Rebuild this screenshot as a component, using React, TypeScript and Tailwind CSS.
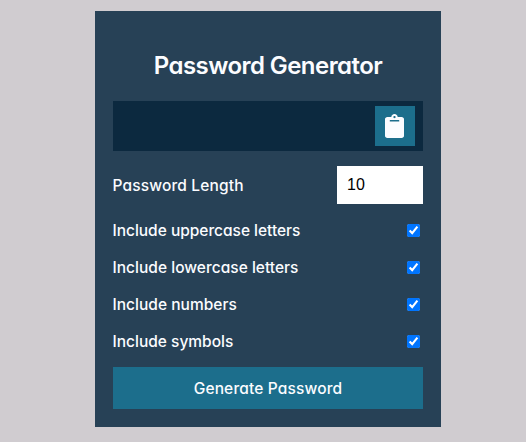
import { FaClipboard } from 'react-icons/fa';

type Option = { id: string; label: string; style: string };

const options: Option[] = [
  { id: 'uppercase', label: 'Include uppercase letters', style: 'tracking-[-0.02px]' },
  { id: 'lowercase', label: 'Include lowercase letters', style: 'tracking-[0.02px]' },
  { id: 'numbers', label: 'Include numbers', style: 'tracking-[0.02px]' },
  { id: 'symbols', label: 'Include symbols', style: 'tracking-[0px]' },
];

export default function App() {
  return (
    <main className="flex h-[442px] w-full justify-center bg-[#d0ccd0] pt-[11px] pl-[10px] font-['Inter',sans-serif] text-[15.5px] leading-6 font-[450] text-[#fbfcff] [font-feature-settings:'cv11']">
      <section className="flex h-[416px] w-[346px] flex-col bg-[#274156] px-[18px] pt-10">
        <h2 className="text-center text-2xl leading-[30px] font-semibold tracking-[-0.56px] whitespace-nowrap">
          Password Generator
        </h2>
        <div className="mt-5 flex h-[50px] items-center justify-end bg-[#0c293f] pr-2">
          <button aria-label="Copy" className="flex size-10 items-center justify-center bg-[#1c6e8c] pr-px">
            <FaClipboard className="h-6 w-[19px]" preserveAspectRatio="none" />
          </button>
        </div>
        <div className="mt-[15px] flex h-[38px] items-center justify-between">
          <label htmlFor="length" className="-ml-[0.5px] pt-0.5 tracking-[0.15px]">Password Length</label>
          <input
            id="length"
            type="text"
            defaultValue="10"
            className="h-[38px] w-[86px] bg-white px-[10px] font-['Liberation_Sans',sans-serif] text-base font-normal text-black"
          />
        </div>
        <div className="mt-2 flex flex-col">
          {options.map((o) => (
            <div key={o.id} className="flex h-[37px] items-center justify-between pr-[3px]">
              <label htmlFor={o.id} className={`-ml-[0.5px] ${o.style}`}>{o.label}</label>
              <input id={o.id} type="checkbox" defaultChecked className="size-[13px]" />
            </div>
          ))}
        </div>
        <button className="mt-[7px] h-[42px] shrink-0 bg-[#1c6e8c] pt-0.5 tracking-[0.15px]">Generate Password</button>
      </section>
    </main>
  );
}
